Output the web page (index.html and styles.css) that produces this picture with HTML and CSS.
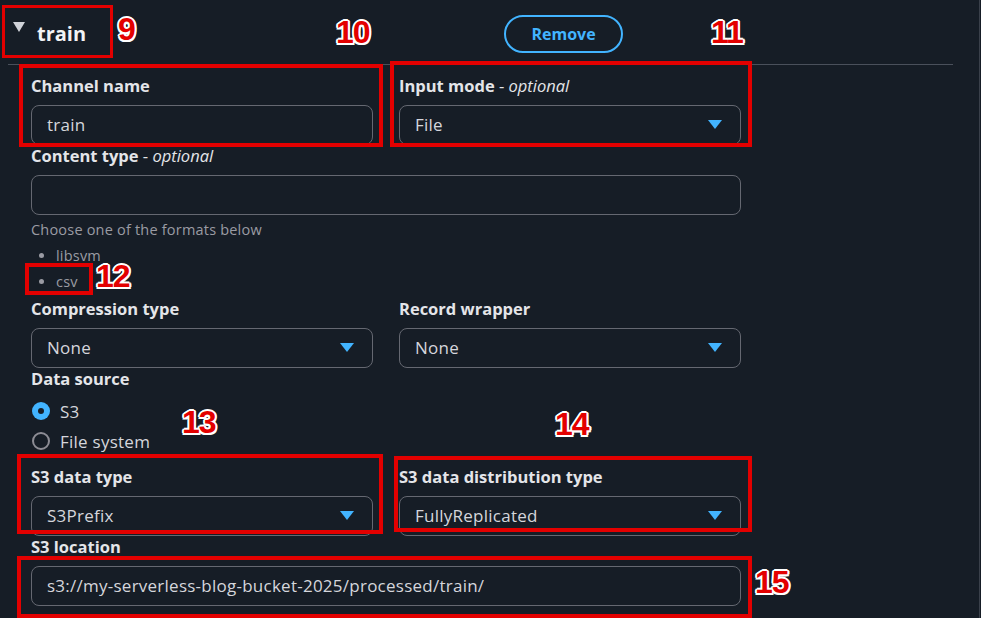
FILE: index.html
```html
<!DOCTYPE html>
<html lang="en">
<head>
<meta charset="utf-8">
<title>Channel</title>
<link rel="stylesheet" href="styles.css">
</head>
<body>
<div class="page">
  <div class="header">
    <div class="title">
      <svg class="tri" width="12" height="10" viewBox="0 0 12 10"><polygon points="0,0 12,0 6,10" fill="#cfd2d8"/></svg>
      <span class="title-text">train</span>
    </div>
    <button class="remove">Remove</button>
  </div>

  <div class="form">
    <div class="row">
      <div class="field">
        <div class="lbl">Channel name</div>
        <div class="ctl">train</div>
      </div>
      <div class="field">
        <div class="lbl">Input mode <span class="opt">- <i>optional</i></span></div>
        <div class="ctl sel"><span>File</span><svg class="caret" width="14" height="9" viewBox="0 0 14 9"><polygon points="0,0 14,0 7,9" fill="#42b4ff"/></svg></div>
      </div>
    </div>

    <div class="field">
      <div class="lbl">Content type <span class="opt">- <i>optional</i></span></div>
      <div class="ctl"></div>
    </div>
    <div class="desc">Choose one of the formats below</div>
    <ul class="fmts">
      <li>libsvm</li>
      <li>csv</li>
    </ul>

    <div class="row">
      <div class="field">
        <div class="lbl">Compression type</div>
        <div class="ctl sel"><span>None</span><svg class="caret" width="14" height="9" viewBox="0 0 14 9"><polygon points="0,0 14,0 7,9" fill="#42b4ff"/></svg></div>
      </div>
      <div class="field">
        <div class="lbl">Record wrapper</div>
        <div class="ctl sel"><span>None</span><svg class="caret" width="14" height="9" viewBox="0 0 14 9"><polygon points="0,0 14,0 7,9" fill="#42b4ff"/></svg></div>
      </div>
    </div>

    <div class="lbl">Data source</div>
    <div class="radios">
      <div class="radio"><span class="dot on"></span><span>S3</span></div>
      <div class="radio"><span class="dot"></span><span>File system</span></div>
    </div>

    <div class="row s3row">
      <div class="field">
        <div class="lbl">S3 data type</div>
        <div class="ctl sel"><span>S3Prefix</span><svg class="caret" width="14" height="9" viewBox="0 0 14 9"><polygon points="0,0 14,0 7,9" fill="#42b4ff"/></svg></div>
      </div>
      <div class="field">
        <div class="lbl">S3 data distribution type</div>
        <div class="ctl sel"><span>FullyReplicated</span><svg class="caret" width="14" height="9" viewBox="0 0 14 9"><polygon points="0,0 14,0 7,9" fill="#42b4ff"/></svg></div>
      </div>
    </div>

    <div class="field">
      <div class="lbl">S3 location</div>
      <div class="ctl">s3://my-serverless-blog-bucket-2025/processed/train/</div>
    </div>
  </div>

  <div class="box b9"></div>
  <div class="box b10"></div>
  <div class="box b11"></div>
  <div class="box b12"></div>
  <div class="box b13"></div>
  <div class="box b14"></div>
  <div class="box b15"></div>

  <div class="num n9">9</div>
  <div class="num n10">10</div>
  <div class="num n11">11</div>
  <div class="num n12">12</div>
  <div class="num n13">13</div>
  <div class="num n14">14</div>
  <div class="num n15">15</div>
</div>
</body>
</html>
```

FILE: styles.css
```css
* { box-sizing: border-box; }
html, body {
  margin: 0;
  padding: 0;
  background: #161d26;
  font-family: "Open Sans", "Noto Sans", sans-serif;
  color: #dedee3;
}
.page {
  position: relative;
  width: 980px;
  height: 618px;
  overflow: hidden;
  border-right: 1px solid #3a404a;
}
.header {
  margin-left: 8px;
  width: 945px;
  height: 65px;
  padding-top: 4px;
  padding-left: 5px;
  border-bottom: 1px solid #4a505b;
  display: flex;
  align-items: center;
}
.title {
  flex: 0 0 491px;
  display: flex;
  align-items: center;
  gap: 12px;
}
.tri { margin-bottom: 14px; }
.title-text {
  font-size: 20px;
  font-weight: 700;
  color: #f2f3f5;
  line-height: 28px;
}
.remove {
  width: 119px;
  height: 38px;
  border: 2px solid #42b4ff;
  border-radius: 20px;
  background: transparent;
  color: #42b4ff;
  font-family: "Open Sans", sans-serif;
  font-size: 16px;
  font-weight: 700;
  padding: 0;
}
.form {
  margin-left: 31px;
  width: 710px;
  padding-top: 10px;
}
.row {
  display: grid;
  grid-template-columns: 342px 342px;
  column-gap: 26px;
}
.lbl {
  font-size: 16.5px;
  line-height: 22px;
  font-weight: 700;
  color: #e4e5e9;
}
.opt { font-weight: 400; }
.field .ctl { margin-top: 8px; }
.ctl {
  height: 40px;
  border: 1px solid #656871;
  border-radius: 8px;
  padding: 0 15px 2px 15px;
  display: flex;
  align-items: center;
  font-size: 17px;
  letter-spacing: 0.25px;
  color: #d5d6dc;
}
.sel .caret { margin-left: auto; margin-right: 3px; margin-top: 1px; }
.desc {
  margin-top: 5px;
  font-size: 14.5px;
  letter-spacing: 0.2px;
  line-height: 20px;
  color: #9a9ba3;
}
.fmts {
  margin: 3px 0 3px 0;
  padding-left: 25px;
  font-size: 14.5px;
  letter-spacing: 0.2px;
  line-height: 26px;
  color: #9a9ba3;
}
.radios { margin-top: 6px; margin-bottom: 10px; }
.radio {
  height: 30px;
  display: flex;
  align-items: center;
  gap: 10px;
  padding-left: 1px;
  font-size: 17px;
  letter-spacing: 0.25px;
  color: #d5d6dc;
}
.dot {
  width: 18px;
  height: 18px;
  border-radius: 50%;
  border: 2px solid #8c8c94;
  position: relative;
  flex: 0 0 18px;
}
.dot.on {
  border: none;
  background: #42b4ff;
}
.dot.on::after {
  content: "";
  position: absolute;
  left: 6px;
  top: 6px;
  width: 6px;
  height: 6px;
  border-radius: 50%;
  background: #161d26;
}

/* annotations */
.box {
  position: absolute;
  border: 4px solid #e30000;
}
.b9 { left: 2px; top: 5px; width: 111px; height: 53px; border-width: 3px; }
.b10 { left: 19px; top: 64px; width: 364px; height: 83px; }
.b11 { left: 390px; top: 61px; width: 362px; height: 86px; }
.b12 { left: 25px; top: 263px; width: 68px; height: 32px; }
.b13 { left: 17px; top: 454px; width: 366px; height: 80px; }
.b14 { left: 394px; top: 456px; width: 358px; height: 76px; }
.b15 { left: 17px; top: 556px; width: 735px; height: 62px; }
.num {
  position: absolute;
  font-family: "Liberation Sans", Arial, sans-serif;
  font-weight: 700;
  font-size: 32px;
  line-height: 32px;
  color: #e30000;
  letter-spacing: -1px;
  text-shadow:
    2px 0 0 #fff, -2px 0 0 #fff, 0 2px 0 #fff, 0 -2px 0 #fff,
    1.5px 1.5px 0 #fff, -1.5px 1.5px 0 #fff, 1.5px -1.5px 0 #fff, -1.5px -1.5px 0 #fff;
}
.n9 { left: 118px; top: 13px; }
.n10 { left: 336px; top: 16px; }
.n11 { left: 711px; top: 16px; }
.n12 { left: 96px; top: 260px; }
.n13 { left: 182px; top: 406px; }
.n14 { left: 555px; top: 408px; }
.n15 { left: 755px; top: 566px; }
```
